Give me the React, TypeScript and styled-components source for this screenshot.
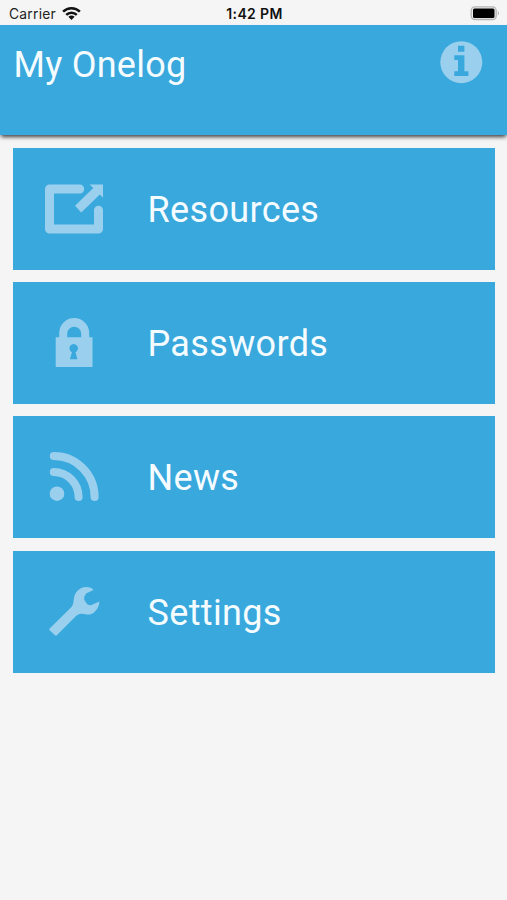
import React from 'react';
import styled, { createGlobalStyle } from 'styled-components';

const BLUE = '#38a8dd';
const PALE = '#9ad0ed';

const GlobalStyle = createGlobalStyle`
  *, *::before, *::after { box-sizing: border-box; }
  body { margin: 0; background: #f5f5f5; font-family: Roboto, sans-serif; }
`;

const Screen = styled.div`
  min-height: 900px;
  display: flex;
  flex-direction: column;
  background: #f5f5f5;
`;

const StatusBar = styled.div`
  height: 25.4px;
  padding: 2px 7px 0 9px;
  display: grid;
  grid-template-columns: 1fr auto 1fr;
  align-items: center;
  font: 400 13.8px/20px Inter, sans-serif;
  color: #222;
`;

const Carrier = styled.div`
  display: flex;
  align-items: center;
  gap: 6px;
  letter-spacing: 0.25px;
`;

const Clock = styled.div`
  font-size: 14px;
  font-weight: 600;
  letter-spacing: 0.35px;
  color: #111;
`;

const Battery = styled.svg`
  justify-self: end;
  display: block;
`;

const Header = styled.header`
  height: 110px;
  padding: 14.4px 24px 0 13px;
  display: flex;
  align-items: flex-start;
  justify-content: space-between;
  background: ${BLUE};
  box-shadow: 0 3px 4px -1px rgba(0, 0, 0, 0.75);
`;

const Title = styled.h1`
  margin: 3.4px 0 0 0.5px;
  font-size: 36px;
  font-weight: 400;
  line-height: 44px;
  letter-spacing: 0.25px;
  color: #f5fcff;
`;

const InfoButton = styled.button`
  padding: 0;
  border: 0;
  background: none;
  line-height: 0;
`;

const Menu = styled.nav`
  display: flex;
  flex-direction: column;
  gap: 12.4px;
  padding: 12.2px 12.5px 0 13px;
`;

const MenuItem = styled.button`
  height: 122px;
  padding: 0 0 0 30px;
  border: 0;
  display: flex;
  align-items: center;
  gap: 42.5px;
  background: ${BLUE};
`;

const Icon = styled.svg`
  width: 62px;
  height: 62px;
  flex: none;
  color: ${PALE};
  fill: ${PALE};
`;

const Label = styled.span`
  padding-top: 2.2px;
  font: 400 36px/44px Roboto, sans-serif;
  letter-spacing: 0.35px;
  color: #f5fcff;
`;

const items = [
  {
    label: 'Resources',
    icon: (
      <>
        <path d="M36.7 11H6.5V51H55.5V32.3" fill="none" stroke="currentColor" strokeWidth="9" strokeLinecap="round" strokeLinejoin="round" />
        <path d="M46.5 6.5H60V19.7L56.8 16.4L38.3 34.4L32 27.7L50.3 10Z" />
      </>
    ),
  },
  {
    label: 'Passwords',
    icon: (
      <path
        fillRule="evenodd"
        d="M12.7 25.3H16.2V21A15 15 0 0 1 46.2 21V25.3H49.5V55H12.7ZM24.2 25.3H38.2V21.7A7 7 0 0 0 24.2 21.7ZM28.9 40.2L27 47.3H34.4L32.5 40.2A4.3 4.3 0 1 0 28.9 40.2Z"
      />
    ),
  },
  {
    label: 'News',
    icon: (
      <>
        <circle cx="14" cy="47.7" r="7.3" />
        <path d="M10.8 10C33.5 10 51.6 28.5 51.6 51.1M10.8 26C24.5 26 35.6 37.3 35.6 51.1" fill="none" stroke="currentColor" strokeWidth="8" strokeLinecap="round" />
      </>
    ),
  },
  {
    label: 'Settings',
    icon: (
      <path d="M6.6 47.6L28 26.5C30 24.5 30.3 22.5 30.7 19C31.2 11.5 36.5 6 43 6C46.5 6 49.3 7 50.5 9L43.5 12.2Q39.5 16.5 42 20Q44.5 24.8 48 24.2L56.3 20.5C56.4 25 53.5 29.8 50 32.3C46 35 41.5 32.4 38.2 32.7C36 33 34.4 33.7 32.8 35.3L14 54Q13 55.2 12 54.2L6.6 49.3Q5.8 48.5 6.6 47.6Z" />
    ),
  },
];

export default function App() {
  return (
    <>
      <GlobalStyle />
      <Screen>
        <StatusBar>
          <Carrier>
            Carrier
            <svg width="19" height="14" viewBox="0 0 19 14" fill="none" stroke="#111" strokeWidth="2.5">
              <path d="M1.1 4.7C5.8 0.1 13.2 0.1 17.9 4.7M4.2 7.9C7.2 5 11.8 5 14.8 7.9" />
              <path d="M6.4 9.7Q9.5 7.3 12.6 9.7L9.5 13.1Z" fill="#111" stroke="none" />
            </svg>
          </Carrier>
          <Clock>1:42 PM</Clock>
          <Battery width="30" height="15" viewBox="0 0 30 15">
            <rect x="1.2" y="0.9" width="25" height="12.6" rx="3.6" fill="#ececec" stroke="#b5b5b5" strokeWidth="1.3" />
            <rect x="3" y="2.5" width="21.5" height="9.4" rx="1.5" fill="#000" />
            <path d="M27.8 5Q30 7.2 27.8 9.4Z" fill="#aaa" />
          </Battery>
        </StatusBar>
        <Header>
          <Title>My Onelog</Title>
          <InfoButton aria-label="Information">
            <svg width="44" height="44" viewBox="0 0 44 44">
              <circle cx="22.3" cy="22.2" r="21" fill={PALE} />
              <path d="M19 5.8H25.4V11.8H19ZM15.3 15.2H25.4V31.3H29.4V36H15.3V31.3H19V19.9H15.3Z" fill={BLUE} />
            </svg>
          </InfoButton>
        </Header>
        <Menu>
          {items.map(({ label, icon }) => (
            <MenuItem key={label}>
              <Icon viewBox="0 0 62 62" aria-hidden="true">{icon}</Icon>
              <Label>{label}</Label>
            </MenuItem>
          ))}
        </Menu>
      </Screen>
    </>
  );
}
